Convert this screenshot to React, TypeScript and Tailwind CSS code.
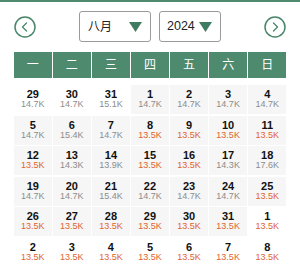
import React from 'react';

type Day = { d: number; p: string; cur: boolean; low: boolean };

const rows: [number, string, boolean][][] = [
  [[29, '14.7K', false], [30, '14.7K', false], [31, '15.1K', false], [1, '14.7K', true], [2, '14.7K', true], [3, '14.7K', true], [4, '14.7K', true]],
  [[5, '14.7K', true], [6, '15.4K', true], [7, '14.7K', true], [8, '13.5K', true], [9, '13.5K', true], [10, '13.5K', true], [11, '13.5K', true]],
  [[12, '13.5K', true], [13, '14.3K', true], [14, '13.9K', true], [15, '13.5K', true], [16, '13.5K', true], [17, '14.3K', true], [18, '17.6K', true]],
  [[19, '14.7K', true], [20, '14.7K', true], [21, '15.4K', true], [22, '14.7K', true], [23, '14.7K', true], [24, '14.7K', true], [25, '13.5K', true]],
  [[26, '13.5K', true], [27, '13.5K', true], [28, '13.5K', true], [29, '13.5K', true], [30, '13.5K', true], [31, '13.5K', true], [1, '13.5K', false]],
  [[2, '13.5K', false], [3, '13.5K', false], [4, '13.5K', false], [5, '13.5K', false], [6, '13.5K', false], [7, '13.5K', false], [8, '13.5K', false]],
];

const days: Day[] = rows.flat().map(([d, p, cur]) => ({ d, p, cur, low: p === '13.5K' }));

const weekdays = ['一', '二', '三', '四', '五', '六', '日'];

function Circle({ dir }: { dir: 'left' | 'right' }) {
  return (
    <svg width="22" height="22" viewBox="0 0 22 22" fill="none">
      <circle cx="11" cy="11" r="10" stroke="#4a8669" strokeWidth="1.5" />
      {dir === 'left' ? (
        <path d="M12.5 7 L8.5 11 L12.5 15" stroke="#4a8669" strokeWidth="1.3" strokeLinecap="round" strokeLinejoin="round" />
      ) : (
        <path d="M9.5 7 L13.5 11 L9.5 15" stroke="#4a8669" strokeWidth="1.3" strokeLinecap="round" strokeLinejoin="round" />
      )}
    </svg>
  );
}

function Triangle() {
  return (
    <svg width="13" height="10" viewBox="0 0 13 10">
      <path d="M0 0 H13 L6.5 10 Z" fill="#3f7b60" />
    </svg>
  );
}

export default function App() {
  return (
    <div className="w-[300px] h-[274px] bg-white overflow-hidden" style={{ fontFamily: '"Liberation Sans", "Noto Sans CJK SC", sans-serif' }}>
      <div className="h-[2px] bg-[#4e8a6e]" />

      {/* controls */}
      <div className="mx-[14px] mt-[9px] flex items-center justify-between">
        <Circle dir="left" />
        <div className="flex gap-[8px]">
          <div className="w-[72px] h-[31px] border border-[#9a9a9a] rounded-[3px] flex items-center justify-between pl-[8px] pr-[8px]">
            <span className="text-[12px] text-[#222]">八月</span>
            <Triangle />
          </div>
          <div className="w-[62px] h-[31px] border border-[#9a9a9a] rounded-[3px] flex items-center justify-between pl-[7px] pr-[8px]">
            <span className="text-[12.5px] text-[#222]">2024</span>
            <Triangle />
          </div>
        </div>
        <Circle dir="right" />
      </div>

      {/* weekday header */}
      <div className="mx-[14px] mt-[10px] grid grid-cols-7 gap-[1.5px]">
        {weekdays.map((w) => (
          <div key={w} className="h-[26px] bg-[#4e8a6e] text-white text-[12px] flex items-center justify-center">
            {w}
          </div>
        ))}
      </div>

      {/* days */}
      <div className="mx-[14px] mt-[7px] grid grid-cols-7 gap-[1.5px]">
        {days.map((day, i) => (
          <div
            key={i}
            className={`h-[29px] pt-[4px] flex flex-col items-center ${day.cur ? 'bg-[#f6f6f6]' : 'bg-white'}`}
          >
            <span className="text-[11px] leading-[11px] font-bold text-[#111]">{day.d}</span>
            <span className={`text-[9px] leading-[9px] ${day.low ? 'text-[#e0642f]' : 'text-[#8c8c8c]'}`}>{day.p}</span>
          </div>
        ))}
      </div>
    </div>
  );
}
